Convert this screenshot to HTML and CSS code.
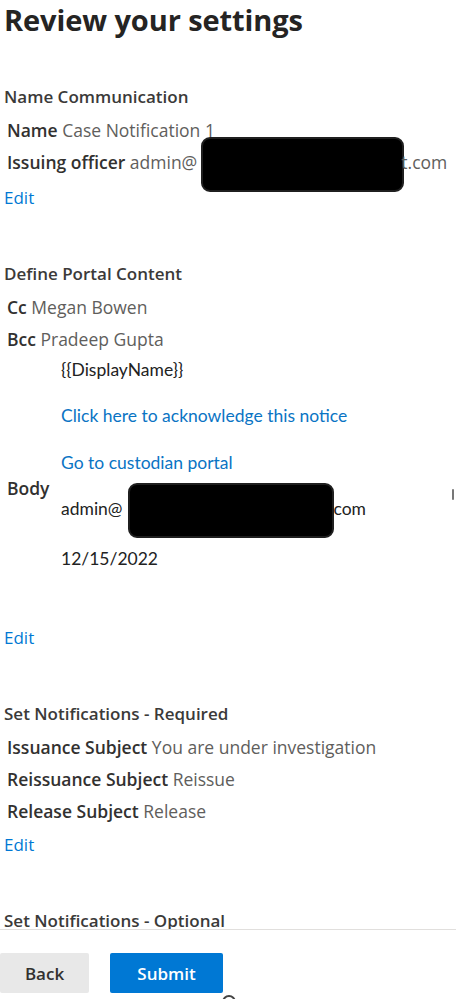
FILE: index.html
```html
<!DOCTYPE html>
<html lang="en">
<head>
    <meta charset="UTF-8">
    <meta name="viewport" content="width=device-width, initial-scale=1.0">
    <title>Review your settings</title>
    <link rel="stylesheet" href="styles.css">
</head>
<body>
    <div class="page">
        <h1 class="title">Review your settings</h1>

        <!-- Name Communication -->
        <section class="summary">
            <h2>Name Communication</h2>
            <div class="field"><b>Name</b> Case Notification 1</div>
            <div class="field"><b>Issuing officer</b> admin@<span class="redact"></span><span class="tail">t.com</span></div>
            <a class="edit" href="#">Edit</a>
        </section>

        <!-- Define Portal Content -->
        <section class="summary">
            <h2>Define Portal Content</h2>
            <div class="field"><b>Cc</b> Megan Bowen</div>
            <div class="field"><b>Bcc</b> Pradeep Gupta</div>
            <div class="body-row">
                <b class="body-label">Body</b>
                <div class="mail">
                    <p>{{DisplayName}}</p>
                    <p><a href="#">Click here to acknowledge this notice</a></p>
                    <p><a href="#">Go to custodian portal</a></p>
                    <p>admin@<span class="redact redact-mail"></span>com</p>
                    <p>12/15/2022</p>
                </div>
            </div>
            <a class="edit" href="#">Edit</a>
        </section>

        <!-- Set Notifications - Required -->
        <section class="summary">
            <h2>Set Notifications - Required</h2>
            <div class="field"><b>Issuance Subject</b> You are under investigation</div>
            <div class="field"><b>Reissuance Subject</b> Reissue</div>
            <div class="field"><b>Release Subject</b> Release</div>
            <a class="edit" href="#">Edit</a>
        </section>

        <!-- Set Notifications - Optional -->
        <section class="summary">
            <h2>Set Notifications - Optional</h2>
        </section>
    </div>

    <span class="edge-mark"></span>

    <footer class="actions">
        <button class="btn btn-back">Back</button>
        <button class="btn btn-submit">Submit</button>
        <span class="help-peek"></span>
    </footer>
</body>
</html>
```

FILE: styles.css
```css
body {
    margin: 0;
    font-family: "Open Sans", "Noto Sans", Arial, sans-serif;
    color: #323130;
    background-color: #ffffff;
}

.page {
    padding: 0 0 80px 4px;
}

.title {
    margin: 0;
    font-size: 29px;
    font-weight: 700;
    line-height: 40px;
    color: #252423;
    letter-spacing: -0.1px;
}

/* Bloques de resumen */
.summary h2 {
    margin: 41px 0 1px;
    font-size: 17px;
    font-weight: 600;
    line-height: 32px;
    color: #3b3a39;
}

.summary + .summary h2 {
    margin-top: 44px;
}

.field {
    padding-left: 3px;
    font-size: 17.5px;
    line-height: 32px;
    color: #605e5c;
    white-space: nowrap;
}

.field b {
    font-weight: 600;
    color: #323130;
}

.edit {
    display: block;
    margin-top: 2px;
    font-size: 17px;
    line-height: 32px;
    color: #0078d4;
    text-decoration: none;
}

/* Tapado de datos */
.redact {
    display: inline-block;
    width: 199px;
    height: 51px;
    margin: -12px 0 -12px 4px;
    vertical-align: middle;
    background: #000;
    border: 2px solid #1f1f1f;
    border-radius: 9px;
}

.tail {
    margin-left: -3px;
}

/* Cuerpo del correo */
.body-row {
    display: flex;
    align-items: center;
    padding-left: 3px;
}

.body-label {
    width: 54px;
    flex-shrink: 0;
    font-size: 17.5px;
    font-weight: 600;
    line-height: 24px;
    color: #323130;
}

.mail {
    padding: 3px 0 27px;
    font-family: Lato, "Open Sans", sans-serif;
    font-size: 17.5px;
    color: #222;
}

.mail p {
    margin: 0 0 22.5px;
    line-height: 24px;
    white-space: nowrap;
}

.mail a {
    color: #0a74c4;
    text-decoration: none;
}

.redact-mail {
    width: 202px;
    margin: -14px 0 -14px 5px;
}

.edge-mark {
    position: absolute;
    left: 452px;
    top: 489px;
    width: 2px;
    height: 11px;
    background: #777;
    border-radius: 1px;
}

/* Barra inferior */
.actions {
    position: fixed;
    left: 0;
    right: 0;
    bottom: 0;
    height: 70px;
    padding-top: 23px;
    box-sizing: border-box;
    background: #ffffff;
    border-top: 1px solid #e1dfdd;
    display: flex;
    align-items: flex-start;
    gap: 21px;
}

.btn {
    height: 40px;
    border: none;
    border-radius: 2px;
    font-family: "Open Sans", "Noto Sans", Arial, sans-serif;
    font-size: 17px;
    font-weight: 600;
    cursor: pointer;
}

.btn-back {
    width: 89px;
    background-color: #e8e8e8;
    color: #323130;
}

.btn-submit {
    width: 113px;
    background-color: #0078d4;
    color: #ffffff;
}

.help-peek {
    position: absolute;
    left: 222px;
    top: 65px;
    width: 10px;
    height: 10px;
    border: 2px solid #444;
    border-radius: 50%;
}
```
